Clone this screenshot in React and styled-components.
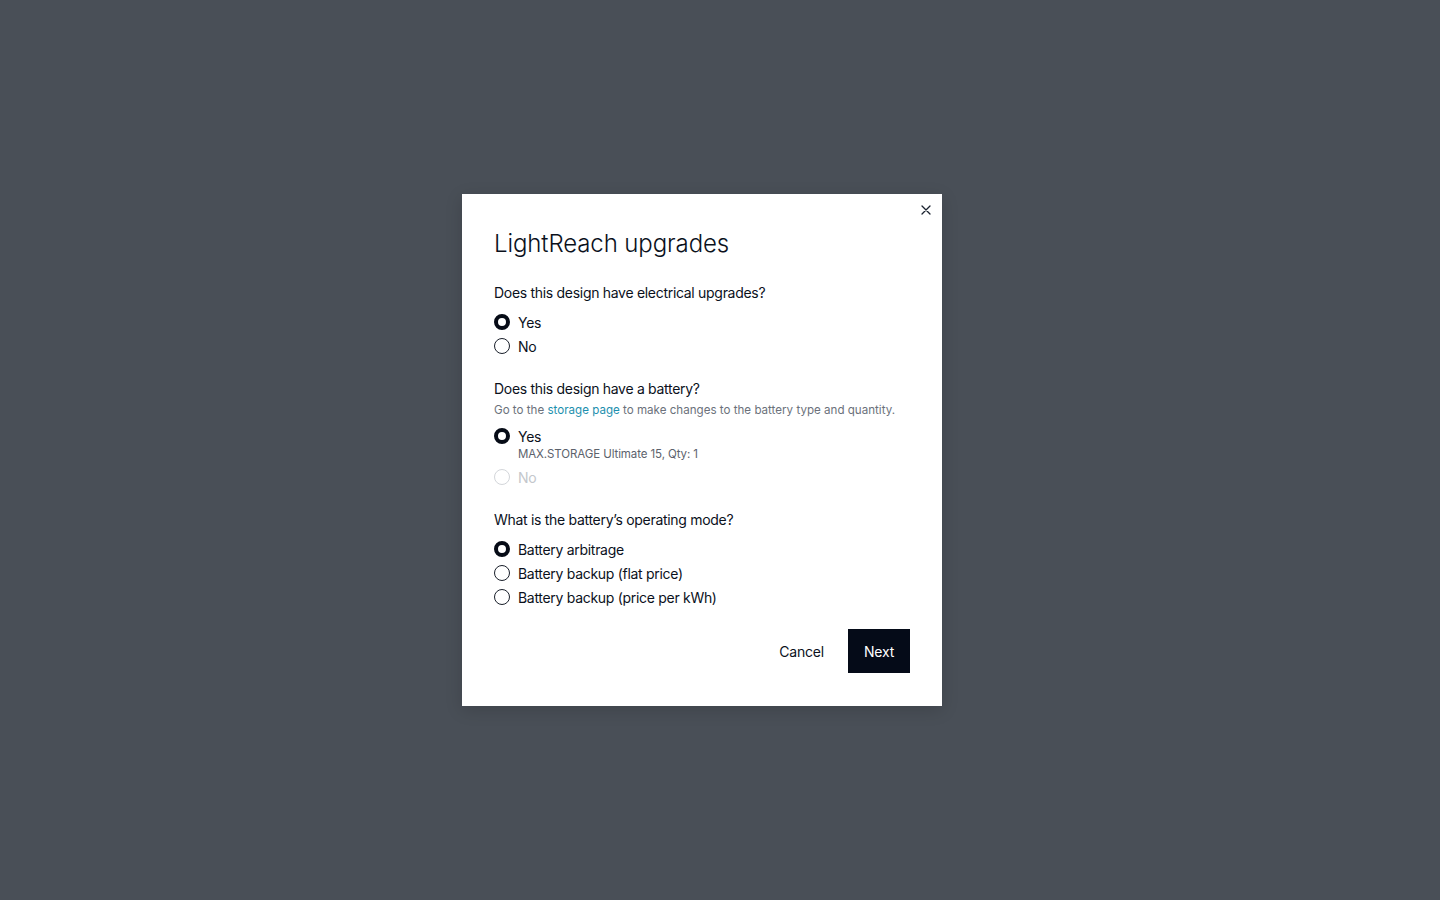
import React from "react";
import styled, { createGlobalStyle } from "styled-components";

const Global = createGlobalStyle`
  html, body { margin: 0; padding: 0; height: 100%; }
  body { background: #494f57; font-family: Inter, "Noto Sans", sans-serif; color: #0b111c; }
  #root { height: 100%; }
`;

const Overlay = styled.div`
  height: 900px;
  display: flex;
  align-items: center;
  justify-content: center;
  padding-right: 36px;
  box-sizing: border-box;
`;

const Modal = styled.div`
  position: relative;
  width: 480px;
  background: #ffffff;
  box-sizing: border-box;
  padding: 34px 32px 33px;
  box-shadow: 0 4px 16px rgba(0, 0, 0, 0.15);
`;

const CloseButton = styled.button`
  position: absolute;
  top: 9px;
  right: 9px;
  width: 14px;
  height: 14px;
  padding: 0;
  border: none;
  background: none;
  display: flex;
  align-items: center;
  justify-content: center;
  cursor: pointer;
  color: #1b2330;
`;

const Title = styled.h2`
  margin: 0 0 23px;
  font-size: 24px;
  line-height: 32px;
  font-weight: 300;
  letter-spacing: -0.1px;
  color: #0b111c;
`;

const Section = styled.div`
  margin-bottom: 21px;
`;

const Question = styled.div`
  font-size: 14px;
  line-height: 20px;
  font-weight: 400;
  letter-spacing: -0.3px;
  color: #0b111c;
`;

const Helper = styled.div`
  margin-top: 2px;
  font-size: 11.6px;
  line-height: 18px;
  color: #6b717b;
`;

const Link = styled.a`
  color: #1d8fae;
  text-decoration: none;
`;

const Options = styled.div`
  margin-top: ${(p) => (p.tight ? "5px" : "7px")};
  display: flex;
  flex-direction: column;
`;

const OptionRow = styled.label`
  display: flex;
  align-items: center;
  gap: 8px;
  height: 24px;
  font-size: 14px;
  letter-spacing: -0.3px;
  color: ${(p) => (p.disabled ? "#c4c7cc" : "#0b111c")};
`;

const Radio = styled.span`
  width: 16px;
  height: 16px;
  box-sizing: border-box;
  border-radius: 50%;
  flex-shrink: 0;
  background: #fff;
  border: ${(p) =>
    p.checked ? "4px solid #060b16" : p.disabled ? "1.5px solid #d3d6da" : "1.5px solid #1a202b"};
`;

const SubText = styled.div`
  margin: -2px 0 3px 24px;
  font-size: 11.5px;
  line-height: 16px;
  letter-spacing: -0.1px;
  color: #5c626c;
`;

const Footer = styled.div`
  display: flex;
  justify-content: flex-end;
  align-items: center;
  gap: 24px;
  margin-top: -1px;
`;

const TextButton = styled.button`
  border: none;
  background: none;
  font-family: inherit;
  font-size: 14px;
  letter-spacing: -0.2px;
  color: #0b111c;
  padding: 0;
  cursor: pointer;
`;

const PrimaryButton = styled.button`
  height: 44px;
  width: 62px;
  padding: 0;
  border: none;
  background: #050b18;
  color: #fff;
  font-family: inherit;
  font-size: 14px;
  letter-spacing: -0.2px;
  cursor: pointer;
`;

const Option = ({ checked, disabled, children }) => (
  <OptionRow disabled={disabled}>
    <Radio checked={checked} disabled={disabled} />
    {children}
  </OptionRow>
);

export default function App() {
  return (
    <>
      <Global />
      <Overlay>
        <Modal>
          <CloseButton aria-label="Close">
            <svg width="10" height="10" viewBox="0 0 10 10" fill="none" stroke="currentColor" strokeWidth="1.3" strokeLinecap="round">
              <path d="M1 1 L9 9 M9 1 L1 9" />
            </svg>
          </CloseButton>
          <Title>LightReach upgrades</Title>

          <Section>
            <Question>Does this design have electrical upgrades?</Question>
            <Options>
              <Option checked>Yes</Option>
              <Option>No</Option>
            </Options>
          </Section>

          <Section>
            <Question>Does this design have a battery?</Question>
            <Helper>
              Go to the <Link href="#">storage page</Link> to make changes to the battery type and quantity.
            </Helper>
            <Options tight>
              <Option checked>Yes</Option>
              <SubText>MAX.STORAGE Ultimate 15, Qty: 1</SubText>
              <Option disabled>No</Option>
            </Options>
          </Section>

          <Section>
            <Question>What is the battery’s operating mode?</Question>
            <Options>
              <Option checked>Battery arbitrage</Option>
              <Option>Battery backup (flat price)</Option>
              <Option>Battery backup (price per kWh)</Option>
            </Options>
          </Section>

          <Footer>
            <TextButton>Cancel</TextButton>
            <PrimaryButton>Next</PrimaryButton>
          </Footer>
        </Modal>
      </Overlay>
    </>
  );
}
